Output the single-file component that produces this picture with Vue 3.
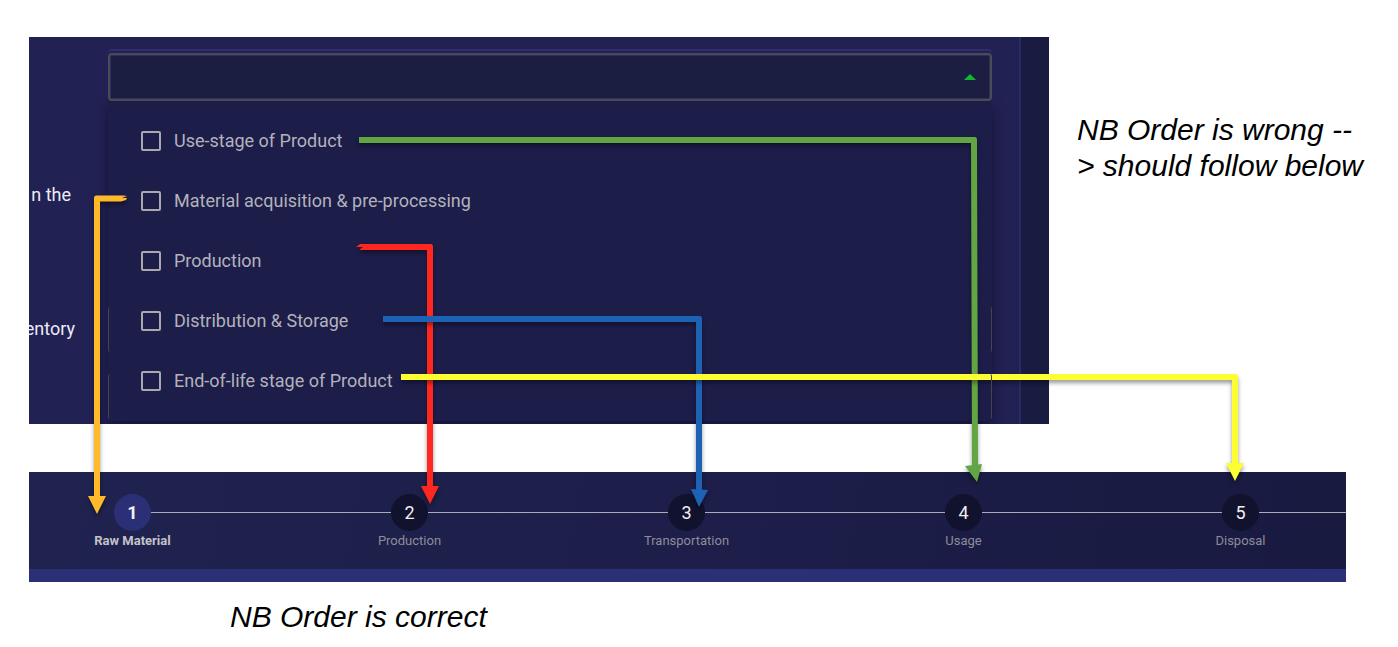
<script setup>
const stages = [
  { id: 'use', label: 'Use-stage of Product' },
  { id: 'material', label: 'Material acquisition & pre-processing' },
  { id: 'production', label: 'Production' },
  { id: 'distribution', label: 'Distribution & Storage' },
  { id: 'end', label: 'End-of-life stage of Product' },
]

const steps = ['Raw Material', 'Production', 'Transportation', 'Usage', 'Disposal']

const arrows = [
  { color: '#ffb92b', line: 'M127 196L123 195.500H96Q94 195.500 94 198V497H100V201.500H121L126 200L127 198L122 198Z', head: '88,496 106,496 97,514' },
  { color: '#ff2720', line: 'M360 244H431Q433 244 433 247V487H427V250H359L363 247H356Z', head: '421,486 439,486 430,504' },
  { color: '#62a543', line: 'M359 137H975Q977 137 977 140L978 466H972L971 143H359Z', head: '965,466 982,464 977,482' },
  { color: '#1e62b5', line: 'M383 316H700Q702 316 702 319V490H696V322H383Z', head: '691,489 708,490 699,507' },
  { color: '#fdfd33', line: 'M401 374H1236Q1238 374 1238 377V464H1232V380H401Z', head: '1226,463 1244,463 1235,481' },
]
</script>

<template>
  <main class="page">
    <div class="top">
      <section class="panel">
        <div class="captions">
          <span>n the</span>
          <span>entory</span>
        </div>
        <div class="form">
          <div class="select-wrap">
            <button class="select" type="button" aria-haspopup="listbox" aria-expanded="true" aria-label="Life cycle stages">
              <svg width="12" height="6" viewBox="0 0 12 6"><path d="M0 6L6 0L12 6Z" fill="#0fb82c" /></svg>
            </button>
          </div>
          <div class="dropdown">
            <div class="covered">
              <div class="covered-field"></div>
              <div class="covered-field"></div>
            </div>
            <div class="menu">
              <label v-for="s in stages" :key="s.id" class="option" :for="s.id">
                <input :id="s.id" type="checkbox" />
                <span>{{ s.label }}</span>
              </label>
            </div>
          </div>
        </div>
        <div class="edge"></div>
      </section>
      <p class="note side">NB Order is wrong --<br />&gt; should follow below</p>
    </div>

    <section class="stepper">
      <ol class="steps">
        <li v-for="(name, i) in steps" :key="name" class="step" :class="{ active: i === 0 }">
          <div class="track">
            <i class="line"></i>
            <span class="dot">{{ i + 1 }}</span>
            <i class="line"></i>
          </div>
          <span class="name">{{ name }}</span>
        </li>
      </ol>
    </section>

    <p class="note below">NB Order is correct</p>

    <svg class="arrows" viewBox="0 0 1398 647" preserveAspectRatio="none" aria-hidden="true">
      <g v-for="a in arrows" :key="a.color" class="arrow" :fill="a.color">
        <path :d="a.line" />
        <polygon :points="a.head" />
      </g>
    </svg>
  </main>
</template>

<style>
body {
  margin: 0;
  background: #fff;
}
</style>

<style scoped>
* {
  box-sizing: border-box;
}
.page {
  position: relative;
  padding: 37px 52px 11px 29px;
  font-family: Roboto, "Liberation Sans", sans-serif;
}
.top {
  display: grid;
  grid-template-columns: minmax(0, 1020fr) minmax(0, 297fr);
}
.panel {
  display: grid;
  grid-template-columns: 79px minmax(0, 1fr) 27px 30px;
  background: #222153;
  overflow: hidden;
}
.captions {
  display: flex;
  flex-direction: column;
  align-items: flex-end;
  gap: 110px;
  padding: 146px 33px 0 0;
  font-size: 18px;
  line-height: 24px;
  color: #ecebf5;
  white-space: nowrap;
}
.captions span:first-child {
  padding-right: 4px;
}
.form {
  padding-top: 12px;
}
.select-wrap {
  position: relative;
  z-index: 1;
  padding-top: 2px;
  border-top: 2px solid #2c2e70;
  border-radius: 4px;
}
.select {
  display: flex;
  align-items: center;
  justify-content: flex-end;
  width: 100%;
  height: 48px;
  padding: 0 14px;
  background: #1b1e40;
  border: 2px solid #4c4c50;
  border-radius: 4px;
  box-shadow: inset 0 0 0 1px #2a2c6c;
}
.dropdown {
  display: grid;
}
.covered,
.menu {
  grid-area: 1 / 1;
}
.covered {
  display: flex;
  flex-direction: column;
  gap: 22px;
  padding: 206px 0 4px;
}
.covered-field {
  position: relative;
  z-index: 1;
  height: 45px;
  border: solid #45444f;
  border-width: 0 1px;
  border-radius: 2px;
}
.menu {
  margin-bottom: 3px;
  padding: 10px 33px;
  background: #1d1d4a;
  border-radius: 0 0 4px 4px;
  box-shadow: 0 5px 12px rgba(10, 10, 40, 0.55);
}
.option {
  display: flex;
  align-items: center;
  gap: 13px;
  height: 60px;
  font-size: 18px;
  line-height: 24px;
  color: #b3b2bb;
}
.option input {
  appearance: none;
  width: 20px;
  height: 20px;
  margin: 0;
  border: 2px solid #aaa9ae;
  border-radius: 2px;
}
.edge {
  grid-column: 4;
  background: #191b40;
  border-left: 2px solid #292a66;
}
.note {
  margin: 0;
  font-family: "Liberation Sans", Arial, sans-serif;
  font-size: 30px;
  font-style: italic;
  line-height: 36px;
  color: #000;
  white-space: nowrap;
}
.side {
  padding: 75px 0 0 28px;
}
.below {
  padding: 17px 0 0 201px;
}
.stepper {
  margin-top: 48px;
  overflow: hidden;
  background: linear-gradient(100deg, #20234f, #1d1e4a 50%, #191a40);
  border-bottom: 13px solid #2b3076;
}
.steps {
  display: grid;
  grid-template-columns: repeat(5, minmax(0, 1fr));
  margin: 0 -33px 0 -35px;
  padding: 22px 0 18px;
  list-style: none;
}
.step {
  display: flex;
  flex-direction: column;
}
.track {
  display: flex;
  align-items: center;
}
.line {
  flex: 1;
  height: 1px;
  background: #aaaab8;
}
.active .line:first-child {
  background: transparent;
}
.dot {
  width: 37px;
  height: 37px;
  border-radius: 50%;
  background: #11122d;
  color: #f0f0f4;
  font-size: 18px;
  line-height: 37px;
  text-align: center;
}
.name {
  font-size: 13px;
  line-height: 20px;
  text-align: center;
  color: #8d8c99;
}
.active .dot {
  background: #2b3076;
  font-weight: 700;
}
.active .name {
  color: #c4c3cb;
  font-weight: 700;
}
.arrows {
  position: absolute;
  top: 0;
  left: 0;
  width: 100%;
  height: 647px;
  pointer-events: none;
}
.arrow {
  filter: drop-shadow(0 3px 2px rgba(0, 0, 0, 0.4));
}
</style>
